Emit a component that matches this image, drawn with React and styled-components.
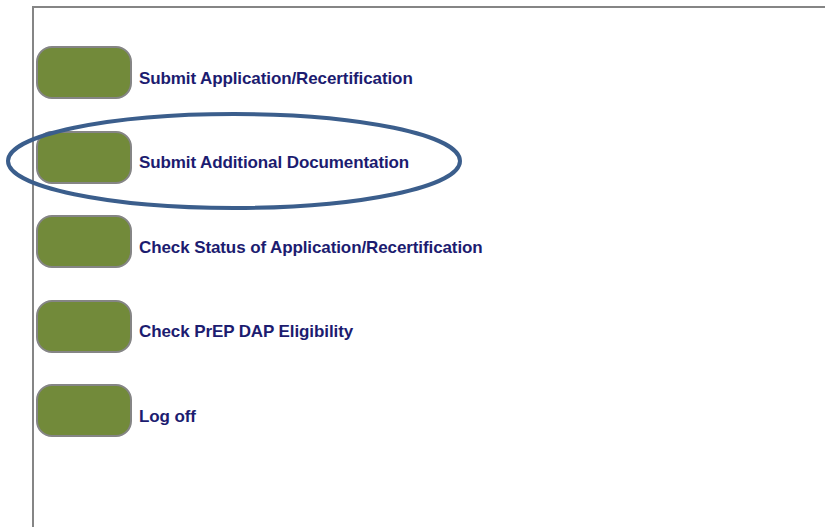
import React from 'react';
import styled, { createGlobalStyle } from 'styled-components';

const GlobalStyle = createGlobalStyle`
  html, body {
    margin: 0;
    padding: 0;
    background: #ffffff;
    overflow: hidden;
  }
`;

const menu = [
  'Submit Application/Recertification',
  'Submit Additional Documentation',
  'Check Status of Application/Recertification',
  'Check PrEP DAP Eligibility',
  'Log off',
];

const App = () => (
  <>
    <GlobalStyle />
    <Page>
      <Frame>
        <List>
          {menu.map((label) => (
            <Row key={label}>
              <Pill type="button" aria-label={label} />
              <Label>{label}</Label>
            </Row>
          ))}
        </List>
      </Frame>
      <Highlight viewBox="0 0 460 102" aria-hidden="true">
        <ellipse cx="231" cy="50" rx="226" ry="47" fill="none" stroke="#3b5e8c" strokeWidth="4" />
      </Highlight>
    </Page>
  </>
);

const Page = styled.div`
  position: relative;
  display: flex;
  flex-direction: column;
  width: 825px;
  height: 527px;
  padding: 6px 0 0 32px;
  box-sizing: border-box;
  font-family: "Liberation Sans", Arial, sans-serif;
`;

const Frame = styled.div`
  flex: 1;
  border-top: 2px solid #858585;
  border-left: 2px solid #858585;
  padding: 38px 0 0 2px;
  box-sizing: border-box;
`;

const List = styled.div`
  display: flex;
  flex-direction: column;
  gap: 31.5px;
`;

const Row = styled.div`
  display: flex;
  align-items: center;
  gap: 7px;
`;

const Pill = styled.button`
  width: 96px;
  height: 53px;
  border: 2px solid #858585;
  border-radius: 16px;
  background: #728a3a;
  padding: 0;
  box-sizing: border-box;
  flex-shrink: 0;
`;

const Label = styled.span`
  padding-top: 12px;
  font-size: 17px;
  font-weight: bold;
  color: #1c1c70;
  letter-spacing: -0.1px;
`;

const Highlight = styled.svg`
  position: absolute;
  left: 3px;
  top: 111px;
  width: 460px;
  height: 102px;
  pointer-events: none;
`;

export default App;
